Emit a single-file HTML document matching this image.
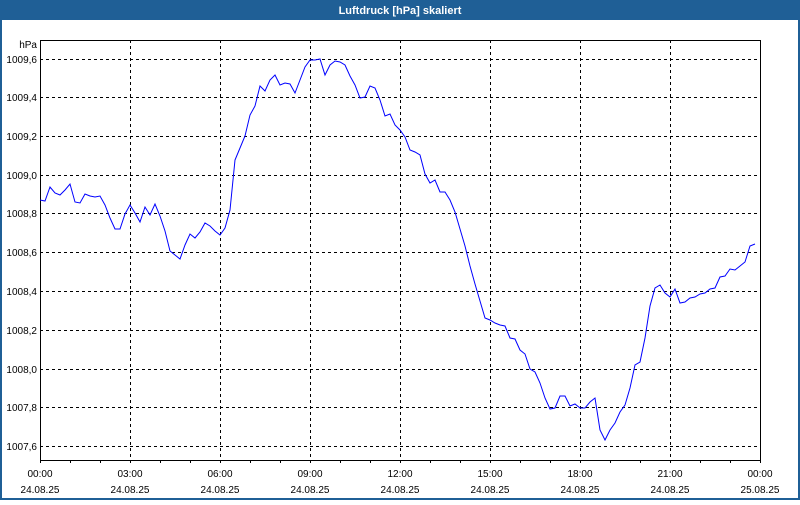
<!DOCTYPE html>
<html><head><meta charset="utf-8"><style>
html,body{margin:0;padding:0;background:#fff;}
body{width:800px;height:500px;overflow:hidden;font-family:"Liberation Sans","DejaVu Sans",sans-serif;}
</style></head><body>
<svg width="800" height="500" viewBox="0 0 800 500" xmlns="http://www.w3.org/2000/svg" font-family="Liberation Sans, DejaVu Sans, sans-serif">
<rect x="0" y="0" width="800" height="500" fill="#1f5f96"/>
<rect x="2" y="20" width="796" height="478" fill="#fff"/>
<text x="400" y="14" fill="#fff" font-size="11" font-weight="bold" text-anchor="middle">Luftdruck [hPa] skaliert</text>
<g stroke="#000" stroke-width="1" stroke-dasharray="3,3" shape-rendering="crispEdges">
<line x1="40" y1="59.5" x2="760" y2="59.5"/>
<line x1="40" y1="97.5" x2="760" y2="97.5"/>
<line x1="40" y1="136.5" x2="760" y2="136.5"/>
<line x1="40" y1="175.5" x2="760" y2="175.5"/>
<line x1="40" y1="213.5" x2="760" y2="213.5"/>
<line x1="40" y1="252.5" x2="760" y2="252.5"/>
<line x1="40" y1="291.5" x2="760" y2="291.5"/>
<line x1="40" y1="330.5" x2="760" y2="330.5"/>
<line x1="40" y1="369.5" x2="760" y2="369.5"/>
<line x1="40" y1="407.5" x2="760" y2="407.5"/>
<line x1="40" y1="446.5" x2="760" y2="446.5"/>
<line x1="130.5" y1="40" x2="130.5" y2="460"/>
<line x1="220.5" y1="40" x2="220.5" y2="460"/>
<line x1="310.5" y1="40" x2="310.5" y2="460"/>
<line x1="400.5" y1="40" x2="400.5" y2="460"/>
<line x1="490.5" y1="40" x2="490.5" y2="460"/>
<line x1="580.5" y1="40" x2="580.5" y2="460"/>
<line x1="670.5" y1="40" x2="670.5" y2="460"/>
</g>
<rect x="40.5" y="40.5" width="720" height="420" fill="none" stroke="#000" stroke-width="1" shape-rendering="crispEdges"/>
<g stroke="#000" stroke-width="1" shape-rendering="crispEdges">
<path d="M40.5 460v3M70.5 460v3M100.5 460v3M130.5 460v3M160.5 460v3M190.5 460v3M220.5 460v3M250.5 460v3M280.5 460v3M310.5 460v3M340.5 460v3M370.5 460v3M400.5 460v3M430.5 460v3M460.5 460v3M490.5 460v3M520.5 460v3M550.5 460v3M580.5 460v3M610.5 460v3M640.5 460v3M670.5 460v3M700.5 460v3M730.5 460v3M760.5 460v3"/>
</g>
<g font-size="10" fill="#000" text-anchor="end">
<text x="37" y="48">hPa</text>
<text x="37" y="63">1009,6</text>
<text x="37" y="101">1009,4</text>
<text x="37" y="140">1009,2</text>
<text x="37" y="179">1009,0</text>
<text x="37" y="217">1008,8</text>
<text x="37" y="256">1008,6</text>
<text x="37" y="295">1008,4</text>
<text x="37" y="334">1008,2</text>
<text x="37" y="373">1008,0</text>
<text x="37" y="411">1007,8</text>
<text x="37" y="450">1007,6</text>
</g>
<g font-size="10" fill="#000" text-anchor="middle">
<text x="40" y="477">00:00</text><text x="40" y="493">24.08.25</text>
<text x="130" y="477">03:00</text><text x="130" y="493">24.08.25</text>
<text x="220" y="477">06:00</text><text x="220" y="493">24.08.25</text>
<text x="310" y="477">09:00</text><text x="310" y="493">24.08.25</text>
<text x="400" y="477">12:00</text><text x="400" y="493">24.08.25</text>
<text x="490" y="477">15:00</text><text x="490" y="493">24.08.25</text>
<text x="580" y="477">18:00</text><text x="580" y="493">24.08.25</text>
<text x="670" y="477">21:00</text><text x="670" y="493">24.08.25</text>
<text x="760" y="477">00:00</text><text x="760" y="493">25.08.25</text>
</g>
<polyline fill="none" stroke="#0000ff" stroke-width="1" points="40,200 45,201 50,187 55,193 60,195 65,190 70,184 75,202 80,203 85,194 90,196 95,197 100,196 105,205 110,218 115,229 120,229 125,214 130,205 135,213 140,222 145,207 150,215 155,204 160,216 165,231 170,251 175,255 180,259 185,245 190,234 195,238 200,232 205,223 210,226 215,231 220,235 225,228 230,210 235,160 240,148 245,136 250,115 255,106 260,86 265,91 270,80 275,75 280,85 285,83 290,84 295,93 300,80 305,67 310,60 315,60 320,59 325,75 330,65 335,61 340,62 345,65 350,76 355,85 360,98 365,97 370,86 375,88 380,100 385,116 390,114 395,125 400,130 405,137 410,150 415,152 420,155 425,174 430,183 435,180 440,192 445,192 450,200 455,212 460,229 465,246 470,266 475,284 480,301 485,318 490,320 495,323 500,325 505,326 510,338 515,339 520,350 525,354 530,369 535,372 540,383 545,398 550,409 555,408 560,396 565,396 570,406 575,404 580,408 585,408 590,402 595,398 600,430 605,440 610,430 615,423 620,412 625,405 630,388 635,365 640,362 645,338 650,306 655,288 660,285 665,293 670,297 675,289 680,303 685,302 690,298 695,297 700,294 705,293 710,289 715,288 720,277 725,276 730,269 735,270 740,266 745,262 750,246 755,244"/>
</svg>
</body></html>
